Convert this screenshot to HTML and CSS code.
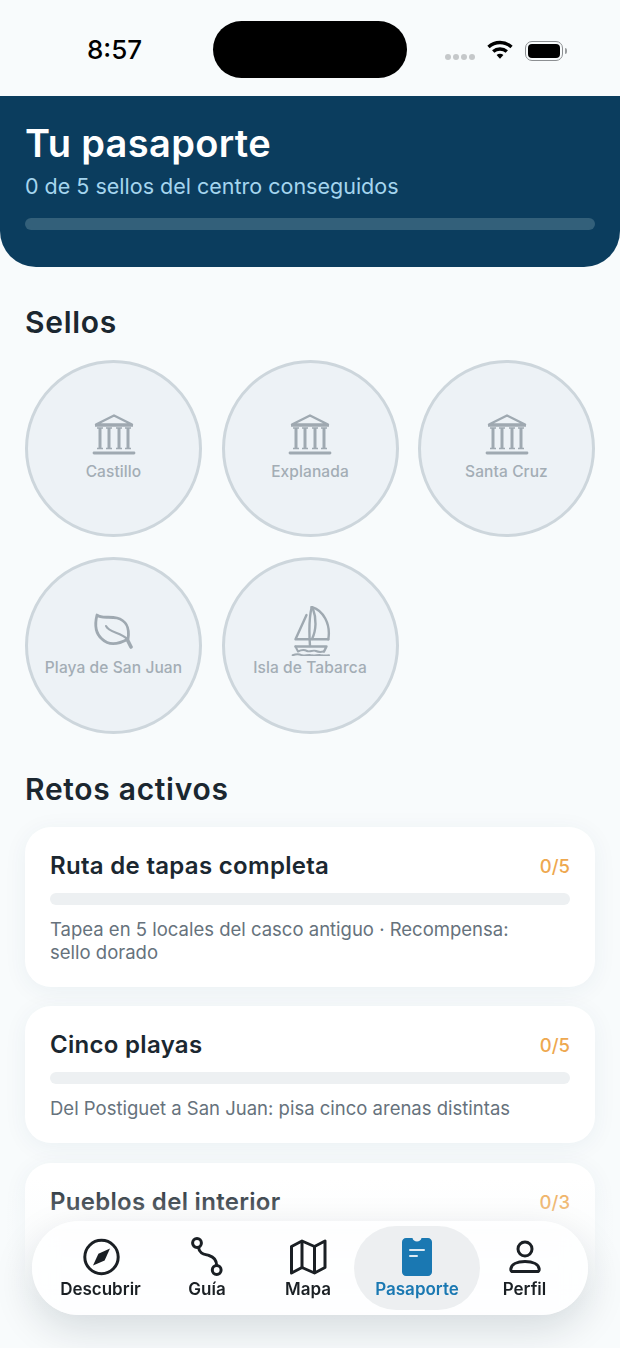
FILE: index.html
```html
<!DOCTYPE html>
<html lang="es">
<head>
    <meta charset="UTF-8" />
    <title>Tu pasaporte</title>
    <link rel="stylesheet" href="styles.css">
</head>
<body>
<div class="screen">

    <div class="status">
        <span class="time">8:57</span>
        <div class="island"></div>
        <div class="status-right">
            <div class="dots"><i></i><i></i><i></i><i></i></div>
            <svg class="wifi" width="26" height="19" viewBox="0 0 26 19">
                <path d="M1.5 7C8 1 18 1 24.5 7" fill="none" stroke="#000" stroke-width="3.4" />
                <path d="M6.2 11.6C10 8.2 16 8.2 19.8 11.6" fill="none" stroke="#000" stroke-width="3.4" />
                <path d="M9.6 15L13 18.8L16.4 15C14.5 13.4 11.5 13.4 9.6 15Z" fill="#000" />
            </svg>
            <div class="battery"><div class="battery-fill"></div></div>
            <div class="battery-nub"></div>
        </div>
    </div>

    <header class="hero">
        <h1>Tu pasaporte</h1>
        <p>0 de 5 sellos del centro conseguidos</p>
        <div class="hero-bar"></div>
    </header>

    <main class="content">
        <h2 class="section-title">Sellos</h2>
        <div class="stamps">
            <div class="stamp">
                <svg class="stamp-icon" width="50" height="50" viewBox="0 0 50 50">
                    <use href="#bank" />
                </svg>
                <span>Castillo</span>
            </div>
            <div class="stamp">
                <svg class="stamp-icon" width="50" height="50" viewBox="0 0 50 50">
                    <use href="#bank" />
                </svg>
                <span>Explanada</span>
            </div>
            <div class="stamp">
                <svg class="stamp-icon" width="50" height="50" viewBox="0 0 50 50">
                    <use href="#bank" />
                </svg>
                <span>Santa Cruz</span>
            </div>
            <div class="stamp">
                <svg class="stamp-icon" width="50" height="50" viewBox="0 0 50 50" fill="none" stroke="#9fa9b1" stroke-width="2.8" stroke-linecap="round" stroke-linejoin="round">
                    <path d="M8 9C12 13 20 10 28 12C36 14 41 21 39 33C30 38 20 40 13 33C6 27 6 17 8 9Z" />
                    <path d="M17 20C20 27 32 26 38 33" stroke-width="2" />
                    <path d="M38 33L42 41" stroke-width="3.6" />
                </svg>
                <span>Playa de San Juan</span>
            </div>
            <div class="stamp">
                <svg class="stamp-icon" width="50" height="50" viewBox="0 0 50 50" fill="none" stroke="#9fa9b1" stroke-width="2.4" stroke-linecap="round" stroke-linejoin="round">
                    <path d="M21.5 9L10.5 33.3H43.3" />
                    <path d="M26.7 1C24 12 24 26 25 40" />
                    <path d="M26.7 1C38 4 46 18 43.3 33.3" />
                    <path d="M28 3C31.5 12 31.5 24 27 33" />
                    <path d="M10.5 40.5H41.5L39 45.5" />
                    <path d="M10.5 40.5L13 45.5C17 43.5 19 43.5 22 45C25 46.5 28 43.5 31 45C34 46.5 36 46 39 45.5" stroke-width="2" />
                    <path d="M7.7 49.3C11 48 14 48 17 49.3C20 50 24 48 27 49.3C30 50 34 48 37 49.3C39 50 41 49.5 44 49.3" stroke-width="2" />
                </svg>
                <span>Isla de Tabarca</span>
            </div>
        </div>

        <h2 class="section-title retos-title">Retos activos</h2>
        <div class="cards">
            <div class="card">
                <div class="card-top">
                    <h3>Ruta de tapas completa</h3>
                    <span class="count">0/5</span>
                </div>
                <div class="card-bar"></div>
                <p>Tapea en 5 locales del casco antiguo · Recompensa: sello dorado</p>
            </div>
            <div class="card">
                <div class="card-top">
                    <h3>Cinco playas</h3>
                    <span class="count">0/5</span>
                </div>
                <div class="card-bar"></div>
                <p>Del Postiguet a San Juan: pisa cinco arenas distintas</p>
            </div>
            <div class="card">
                <div class="card-top">
                    <h3>Pueblos del interior</h3>
                    <span class="count">0/3</span>
                </div>
                <div class="card-bar"></div>
            </div>
        </div>
    </main>

    <div class="fade"></div>

    <nav class="tabs">
        <a class="tab">
            <svg width="40" height="40" viewBox="0 0 40 40" fill="none" stroke="#1a1f24" stroke-width="3">
                <circle cx="20.5" cy="20" r="16.7" />
                <path d="M29 11.5L23.6 23.6L12 28.5L17.4 16.8Z" fill="#1a1f24" stroke="none" />
            </svg>
            <span>Descubrir</span>
        </a>
        <a class="tab">
            <svg width="40" height="40" viewBox="0 0 40 40" fill="none" stroke="#1a1f24" stroke-width="3" stroke-linecap="round">
                <circle cx="10" cy="6" r="4.4" />
                <circle cx="29.7" cy="33" r="4.4" />
                <path d="M11.5 10.5C12.5 17 17 17 22 18.5C27 20 29.5 23 29.7 28.5" />
            </svg>
            <span>Guía</span>
        </a>
        <a class="tab">
            <svg width="40" height="40" viewBox="0 0 40 40" fill="none" stroke="#1a1f24" stroke-width="3" stroke-linejoin="round">
                <path d="M3.5 9.5L14 4L26.5 9.5L37 4V30.5L26.5 36L14 30.5L3.5 36Z" />
                <path d="M14 4V30.5M26.5 9.5V36" />
            </svg>
            <span>Mapa</span>
        </a>
        <a class="tab tab-active">
            <svg width="40" height="40" viewBox="0 0 40 40">
                <path d="M9 1H15.5C16 5.5 24 5.5 24.5 1H31C33.2 1 35 2.8 35 5V35C35 37.2 33.2 39 31 39H9C6.8 39 5 37.2 5 35V5C5 2.8 6.8 1 9 1Z" fill="#1a78b2" />
                <path d="M13 13H27M13 19H20" stroke="#fff" stroke-width="2" stroke-linecap="round" opacity=".85" />
            </svg>
            <span>Pasaporte</span>
        </a>
        <a class="tab">
            <svg width="40" height="40" viewBox="0 0 40 40" fill="none" stroke="#1a1f24" stroke-width="3" stroke-linejoin="round">
                <circle cx="20" cy="12" r="7" />
                <path d="M5.8 32C6.3 27.3 12 24.5 20 24.5C28 24.5 33.7 27.3 34.2 32C34.4 33.7 33.5 34.6 32 34.6H8C6.5 34.6 5.6 33.7 5.8 32Z" />
            </svg>
            <span>Perfil</span>
        </a>
    </nav>
</div>

<svg class="defs" width="0" height="0">
    <defs>
        <g id="bank" fill="none" stroke="#9fa9b1">
            <path d="M7 14.5L25 5.5L43 14.5Z" stroke-width="2.4" stroke-linejoin="round" />
            <path d="M6 15.5H44" stroke-width="2.4" />
            <path d="M11 18V38M20 18V38M30 18V38M39 18V38" stroke-width="3" />
            <path d="M8 18H14M17 18H23M27 18H33M36 18H42M8 38.5H14M17 38.5H23M27 38.5H33M36 38.5H42" stroke-width="1.4" />
            <path d="M5 43H45" stroke-width="2.8" stroke-linecap="round" />
        </g>
    </defs>
</svg>
</body>
</html>
```

FILE: styles.css
```css
* {
    box-sizing: border-box;
}

html, body {
    margin: 0;
    padding: 0;
}

body {
    font-family: Inter, "Liberation Sans", sans-serif;
    background-color: #f8fbfc;
}

.defs {
    display: block;
    height: 0;
}

.screen {
    position: relative;
    width: 620px;
    height: 1348px;
    overflow: hidden;
}

/* status bar */
.status {
    display: flex;
    align-items: center;
    height: 96px;
    padding: 2px 0 0 87px;
}

.time {
    width: 126px;
    font-size: 26px;
    font-weight: 500;
    color: #000;
}

.island {
    width: 194px;
    height: 57px;
    margin-top: 1px;
    border-radius: 29px;
    background-color: #000;
}

.status-right {
    display: flex;
    align-items: center;
    margin-top: 3px;
    margin-left: 38px;
}

.dots {
    display: flex;
    gap: 2px;
    margin-top: 12px;
    margin-right: 12px;
}

    .dots i {
        width: 6px;
        height: 6px;
        border-radius: 50%;
        background-color: #c5c8ca;
    }

.wifi {
    display: block;
    margin-top: -2px;
}

.battery {
    width: 38px;
    height: 20px;
    margin-left: 12px;
    padding: 2px;
    border: 1.5px solid #8c8f92;
    border-radius: 7px;
}

.battery-fill {
    height: 100%;
    border-radius: 4px;
    background-color: #000;
}

.battery-nub {
    width: 2px;
    height: 6px;
    margin-left: 2px;
    border-radius: 0 2px 2px 0;
    background-color: #9a9d9f;
}

/* header */
.hero {
    height: 171px;
    padding: 25px 25px 0;
    border-radius: 0 0 36px 36px;
    background-color: #0b3d5e;
}

    .hero h1 {
        margin: 0;
        font-size: 38px;
        line-height: 44px;
        font-weight: 600;
        letter-spacing: 0.35px;
        color: #fff;
    }

    .hero p {
        margin: 7px 0 0;
        font-size: 21.5px;
        line-height: 28px;
        color: #a5d5ee;
    }

.hero-bar {
    height: 12px;
    margin-top: 18px;
    border-radius: 6px;
    background-color: #33607a;
}

/* content */
.content {
    padding: 37px 25px 0;
}

.section-title {
    margin: 0;
    font-size: 30px;
    line-height: 36px;
    font-weight: 600;
    letter-spacing: 0.7px;
    color: #1b2730;
}

.retos-title {
    margin-top: 37px;
}

.stamps {
    display: grid;
    grid-template-columns: repeat(3, 1fr);
    gap: 19.5px;
    margin-top: 20px;
}

.stamp {
    display: flex;
    flex-direction: column;
    align-items: center;
    justify-content: center;
    aspect-ratio: 1;
    padding-bottom: 6px;
    border: 3px solid #cdd6dc;
    border-radius: 50%;
    background-color: #edf2f6;
}

    .stamp span {
        margin-top: 2px;
        font-size: 15.5px;
        line-height: 20px;
        font-weight: 500;
        letter-spacing: 0.1px;
        color: #a3adb5;
        white-space: nowrap;
    }

.stamp-icon {
    display: block;
}

.cards {
    display: flex;
    flex-direction: column;
    gap: 19.5px;
    margin-top: 20px;
}

.card {
    min-height: 137px;
    padding: 24px 25px 23px;
    border-radius: 26px;
    background-color: #fff;
    box-shadow: 0 4px 24px rgba(11, 61, 94, 0.06);
}

.card-top {
    display: flex;
    justify-content: space-between;
    align-items: center;
}

    .card-top h3 {
        margin: 0;
        font-size: 24px;
        line-height: 30px;
        font-weight: 600;
        letter-spacing: 0.3px;
        color: #1b2730;
    }

.count {
    font-size: 18.5px;
    font-weight: 500;
    color: #eea84f;
}

.card-bar {
    height: 12px;
    margin-top: 12px;
    border-radius: 6px;
    background-color: #edf0f2;
}

.card p {
    max-width: 480px;
    margin: 13px 0 0;
    font-size: 18.5px;
    line-height: 23px;
    color: #66727c;
}

/* bottom */
.fade {
    position: absolute;
    left: 0;
    right: 0;
    bottom: 0;
    height: 170px;
    background: linear-gradient(to bottom, rgba(248, 251, 252, 0), rgba(248, 251, 252, 0.9) 60%, #f8fbfc);
}

.tabs {
    position: absolute;
    left: 32px;
    bottom: 33px;
    width: 556px;
    height: 94px;
    display: grid;
    grid-template-columns: 103px 110px 92px 126px 89px;
    padding: 5px 0 5px 17px;
    border-radius: 47px;
    background-color: rgba(255, 255, 255, 0.8);
    backdrop-filter: blur(12px);
    box-shadow: 0 14px 40px rgba(10, 30, 45, 0.14);
}

.tab {
    display: flex;
    flex-direction: column;
    align-items: center;
    padding-top: 11px;
    border-radius: 42px;
    color: #1a1f24;
}

    .tab svg {
        display: block;
    }

    .tab span {
        margin-top: 2px;
        font-size: 17px;
        line-height: 20px;
        font-weight: 600;
    }

.tab-active {
    background-color: rgba(225, 229, 231, 0.6);
    color: #1a78b2;
}
```
